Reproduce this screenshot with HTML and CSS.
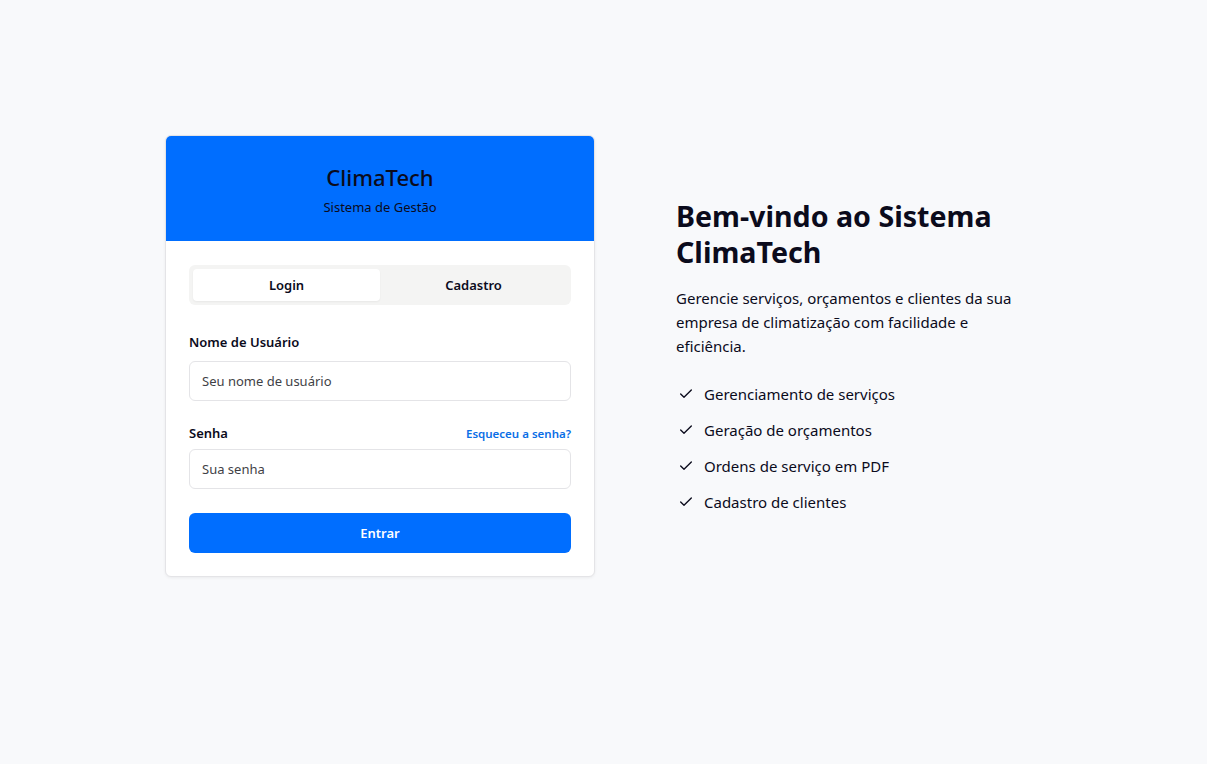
FILE: index.html
```html
<!DOCTYPE html>
<html lang="pt-BR">
<head>
<meta charset="utf-8">
<title>ClimaTech</title>
<link rel="stylesheet" href="styles.css">
</head>
<body>
<main class="page">
  <section class="card">
    <header class="card-header">
      <h1 class="brand">ClimaTech</h1>
      <p class="brand-sub">Sistema de Gestão</p>
    </header>
    <div class="card-body">
      <div class="tabs">
        <button class="tab active">Login</button>
        <button class="tab">Cadastro</button>
      </div>
      <form class="form">
        <div class="field">
          <div class="label-row"><label class="label">Nome de Usuário</label></div>
          <input class="input" type="text" placeholder="Seu nome de usuário">
        </div>
        <div class="field field-pass">
          <div class="label-row"><label class="label">Senha</label><a class="forgot" href="#">Esqueceu a senha?</a></div>
          <input class="input" type="password" placeholder="Sua senha">
        </div>
        <button class="submit" type="button">Entrar</button>
      </form>
    </div>
  </section>
  <section class="intro">
    <h2 class="intro-title">Bem-vindo ao Sistema ClimaTech</h2>
    <p class="intro-text">Gerencie serviços, orçamentos e clientes da sua empresa de climatização com facilidade e eficiência.</p>
    <ul class="features">
      <li><svg class="check" viewBox="0 0 24 24" width="16" height="16"><path d="M20 6 9 17l-5-5" fill="none" stroke="currentColor" stroke-width="2" stroke-linecap="round" stroke-linejoin="round"/></svg>Gerenciamento de serviços</li>
      <li><svg class="check" viewBox="0 0 24 24" width="16" height="16"><path d="M20 6 9 17l-5-5" fill="none" stroke="currentColor" stroke-width="2" stroke-linecap="round" stroke-linejoin="round"/></svg>Geração de orçamentos</li>
      <li><svg class="check" viewBox="0 0 24 24" width="16" height="16"><path d="M20 6 9 17l-5-5" fill="none" stroke="currentColor" stroke-width="2" stroke-linecap="round" stroke-linejoin="round"/></svg>Ordens de serviço em PDF</li>
      <li><svg class="check" viewBox="0 0 24 24" width="16" height="16"><path d="M20 6 9 17l-5-5" fill="none" stroke="currentColor" stroke-width="2" stroke-linecap="round" stroke-linejoin="round"/></svg>Cadastro de clientes</li>
    </ul>
  </section>
</main>
</body>
</html>
```

FILE: styles.css
```css
* { box-sizing: border-box; }
html, body { margin: 0; padding: 0; }
body {
  background: #f8f9fb;
  font-family: "Noto Sans", "Open Sans", sans-serif;
  color: #0b0b1c;
  min-height: 764px;
}
.page {
  width: 877px;
  margin: 0 auto;
  padding-top: 135px;
  display: flex;
  align-items: center;
  gap: 81px;
}
.card {
  width: 430px;
  flex: none;
  background: #fff;
  border: 1px solid #e4e4e7;
  border-radius: 6px;
  overflow: hidden;
  box-shadow: 0 1px 3px rgba(0,0,0,0.06);
}
.card-header {
  background: #006eff;
  height: 106px;
  text-align: center;
  padding-top: 27px;
  margin: -1px -1px 0;
}
.brand {
  margin: 0;
  font-size: 22px;
  font-weight: 500;
  line-height: 30px;
  color: #0b0b1c;
}
.brand-sub {
  margin: 0;
  font-size: 13px;
  line-height: 30px;
  color: #0b0b1c;
}
.card-body {
  padding: 24px 23px 23px;
}
.tabs {
  display: grid;
  grid-template-columns: 1fr 1fr;
  background: #f4f4f3;
  border-radius: 6px;
  padding: 4px;
  height: 40px;
}
.tab {
  font-family: inherit;
  border: 0;
  background: transparent;
  font-size: 13px;
  font-weight: 600;
  color: #0b0b1c;
  border-radius: 4px;
  padding: 0;
}
.tab.active {
  background: #fff;
  box-shadow: 0 1px 2px rgba(0,0,0,0.05);
}
.form {
  margin-top: 27px;
  display: flex;
  flex-direction: column;
}
.field { margin-bottom: 22px; }
.field-pass { margin-bottom: 24px; }
.label-row {
  display: flex;
  justify-content: space-between;
  align-items: center;
  height: 20px;
  margin-bottom: 9px;
}
.field-pass .label-row { margin-bottom: 6px; }
.label {
  font-size: 13px;
  font-weight: 600;
}
.forgot {
  font-size: 11.5px;
  font-weight: 600;
  color: #0a6ee6;
  text-decoration: none;
}
.input {
  display: block;
  width: 100%;
  height: 40px;
  border: 1px solid #e4e4e7;
  border-radius: 6px;
  padding: 0 12px;
  font-family: inherit;
  font-size: 13px;
  color: #0b0b1c;
  background: #fff;
}
.input::placeholder { color: #3f3f46; }
.submit {
  height: 40px;
  border: 0;
  border-radius: 6px;
  background: #006eff;
  color: #fff;
  font-family: inherit;
  font-size: 13px;
  font-weight: 600;
}
.intro { flex: 1; }
.intro-title {
  margin: 0;
  font-size: 28.6px;
  line-height: 36px;
  font-weight: 700;
}
.intro-text {
  margin: 16px 0 0;
  font-size: 15px;
  line-height: 24px;
  max-width: 350px;
}
.features {
  list-style: none;
  margin: 24px 0 0;
  padding: 0;
  display: flex;
  flex-direction: column;
  gap: 12px;
}
.features li {
  display: flex;
  align-items: center;
  gap: 10px;
  font-size: 15px;
  line-height: 24px;
}
.check { flex: none; margin-left: 2px; }
```
